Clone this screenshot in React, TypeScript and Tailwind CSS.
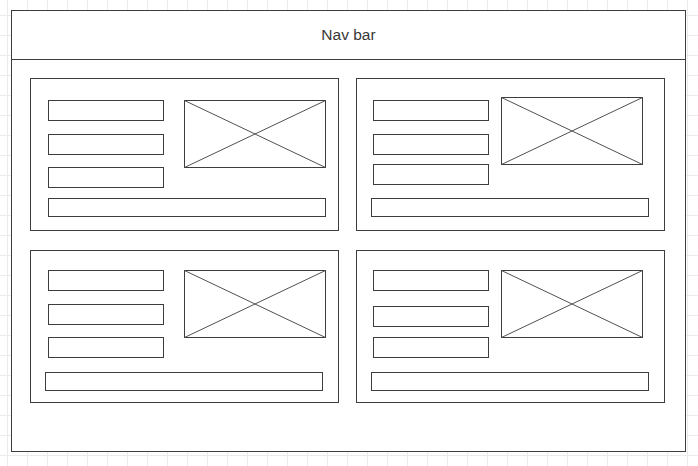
import React from "react";

interface CardLayout {
  id: string;
  pad: string;
  box1: string;
  box2: string;
  box3: string;
  image: string;
  bar: string;
}

const cards: CardLayout[] = [
  {
    id: "a",
    pad: "pl-[17px]",
    box1: "mt-[21px]",
    box2: "mt-[13px]",
    box3: "mt-[12px]",
    image: "ml-[20px] mt-[21px]",
    bar: "mt-[10px] ml-0",
  },
  {
    id: "b",
    pad: "pl-[16px]",
    box1: "mt-[21px]",
    box2: "mt-[13px]",
    box3: "mt-[9px]",
    image: "ml-[12px] mt-[18px]",
    bar: "mt-[13px] -ml-[2px]",
  },
  {
    id: "c",
    pad: "pl-[17px]",
    box1: "mt-[19px]",
    box2: "mt-[13px]",
    box3: "mt-[12px]",
    image: "ml-[20px] mt-[19px]",
    bar: "mt-[14px] -ml-[3px]",
  },
  {
    id: "d",
    pad: "pl-[16px]",
    box1: "mt-[19px]",
    box2: "mt-[15px]",
    box3: "mt-[10px]",
    image: "ml-[12px] mt-[19px]",
    bar: "mt-[14px] -ml-[2px]",
  },
];

const Field = ({ className }: { className: string }) => (
  <div className={`w-[116px] h-[21px] border border-[#3d3d3d] ${className}`} />
);

const ImagePlaceholder = ({ className }: { className: string }) => (
  <svg
    width="142"
    height="68"
    viewBox="0 0 142 68"
    className={`shrink-0 ${className}`}
  >
    <rect x="0.5" y="0.5" width="141" height="67" fill="none" stroke="#3d3d3d" />
    <line x1="0.5" y1="0.5" x2="141.5" y2="67.5" stroke="#505050" />
    <line x1="0.5" y1="67.5" x2="141.5" y2="0.5" stroke="#505050" />
  </svg>
);

const Card = ({ card }: { card: CardLayout }) => (
  <div className={`w-[309px] h-[153px] border border-[#3d3d3d] flex flex-col ${card.pad}`}>
    <div className="flex items-start">
      <div className="flex flex-col">
        <Field className={card.box1} />
        <Field className={card.box2} />
        <Field className={card.box3} />
      </div>
      <ImagePlaceholder className={card.image} />
    </div>
    <div className={`w-[278px] h-[19px] border border-[#3d3d3d] ${card.bar}`} />
  </div>
);

export default function App() {
  return (
    <div className="w-[698px] h-[466px] overflow-hidden bg-white bg-[linear-gradient(to_right,#ebebeb_1px,transparent_1px),linear-gradient(to_bottom,#ebebeb_1px,transparent_1px)] bg-[size:20px_20px] bg-[position:7px_15px] pl-[11px] pt-[10px] font-['Liberation_Sans',Arial,sans-serif]">
      <div className="w-[675px] h-[442px] border border-[#3d3d3d] bg-white flex flex-col">
        <div className="h-[49px] border-b border-[#3d3d3d] flex items-center justify-center text-[15.5px] text-[#383838]">
          Nav bar
        </div>
        <div className="grid grid-cols-[309px_309px] gap-x-[17px] gap-y-[19px] pl-[18px] pt-[18px]">
          {cards.map((card) => (
            <Card key={card.id} card={card} />
          ))}
        </div>
      </div>
    </div>
  );
}
